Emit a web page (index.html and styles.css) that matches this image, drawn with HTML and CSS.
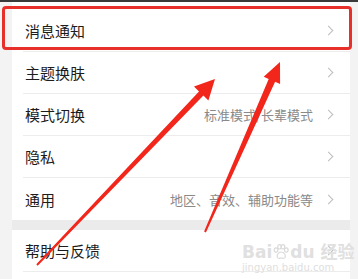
FILE: index.html
```html
<!DOCTYPE html>
<html>
<head>
    <meta charset="utf-8">
    <title>设置</title>
    <link rel="stylesheet" href="styles.css">
</head>
<body>
    <div class="topbar"></div>
    <div class="page">
        <ul class="group group--first">
            <li class="row"><span class="row__label">消息通知</span><span class="row__arrow"></span></li>
            <li class="row"><span class="row__label">主题换肤</span><span class="row__arrow"></span></li>
            <li class="row"><span class="row__label">模式切换</span><span class="row__value">标准模式/长辈模式</span><span class="row__arrow"></span></li>
            <li class="row"><span class="row__label">隐私</span><span class="row__arrow"></span></li>
            <li class="row row--last"><span class="row__label">通用</span><span class="row__value">地区、音效、辅助功能等</span><span class="row__arrow"></span></li>
        </ul>
        <div class="gap"></div>
        <ul class="group">
            <li class="row"><span class="row__label">帮助与反馈</span><span class="row__arrow"></span></li>
        </ul>
    </div>

    <!-- 截图上的标注 -->
    <div class="mark"></div>
    <svg class="arrows" width="358" height="279" viewBox="0 0 358 279">
        <polygon fill="#f2261b" points="36.3,264.3 199,91.4 194,86.6 215,79 208.4,100.4 203.4,95.6 37.7,265.7"/>
        <polygon fill="#f2261b" points="204.1,231.6 268.7,78.9 263.7,76.7 280,62 280.1,83.9 275.1,81.7 205.9,232.4"/>
    </svg>
    <div class="watermark">
        <div class="watermark__logo">Bai<svg class="watermark__paw" width="16" height="16" viewBox="0 0 16 16">
            <g fill="none" stroke="#dadada" stroke-width="1.2">
                <ellipse cx="3" cy="6" rx="1.8" ry="2.2"/>
                <ellipse cx="6.5" cy="2.8" rx="1.8" ry="2.2"/>
                <ellipse cx="10" cy="2.8" rx="1.8" ry="2.2"/>
                <ellipse cx="13.3" cy="6" rx="1.8" ry="2.2"/>
                <path d="M8.2 8 C5 8 3.5 11.5 4.5 13.5 C5.5 15 7 14 8.2 14 C9.4 14 11 15 12 13.5 C13 11.5 11.4 8 8.2 8 Z"/>
            </g>
        </svg>du 经验</div>
        <div class="watermark__url">jingyan.baidu.com</div>
    </div>
</body>
</html>
```

FILE: styles.css
```css
* {
    margin: 0;
    padding: 0;
    box-sizing: border-box;
}
ul, li {
    list-style: none;
}
html, body {
    width: 358px;
    height: 279px;
    overflow: hidden;
}
body {
    position: relative;
    background: #f3f3f3;
    font-family: "Noto Sans CJK SC", "Noto Sans", sans-serif;
}
.topbar {
    height: 2px;
    background: #3a3a3a;
}
.page {
    margin: 0 8px 0 12px;
    background: #fff;
    height: 277px;
}
.group {
    background: #fff;
}
.group--first {
    padding-top: 8px;
}
.row {
    display: flex;
    align-items: center;
    height: 42px;
    margin-left: 11px;
    padding: 0 16px 0 2px;
    border-bottom: 1px solid #ececec;
}
.row--last {
    border-bottom: none;
}
.row__label {
    flex: 1;
    font-size: 15px;
    color: #1c1c1c;
}
.row__value {
    font-size: 13px;
    color: #8a8a8a;
    margin-right: 12px;
}
.row__arrow {
    width: 7px;
    height: 7px;
    border-top: 1.2px solid #bdbdbd;
    border-right: 1.2px solid #bdbdbd;
    transform: rotate(45deg);
    margin-right: 2px;
}
.gap {
    height: 10px;
    background: #ebebeb;
}
.mark {
    position: absolute;
    left: 2px;
    top: 6px;
    width: 350px;
    height: 44px;
    border: 3px solid #e8302a;
    border-radius: 4px;
}
.arrows {
    position: absolute;
    left: 0;
    top: 0;
}
.watermark {
    position: absolute;
    left: 242px;
    top: 242px;
    color: #e0e0e0;
    font-family: "DejaVu Sans", "Noto Sans CJK SC", sans-serif;
}
.watermark__logo {
    display: flex;
    align-items: center;
    font-size: 17px;
    font-weight: bold;
    line-height: 20px;
}
.watermark__paw {
    margin: 0 1px;
}
.watermark__url {
    font-size: 10px;
    line-height: 12px;
}
```
